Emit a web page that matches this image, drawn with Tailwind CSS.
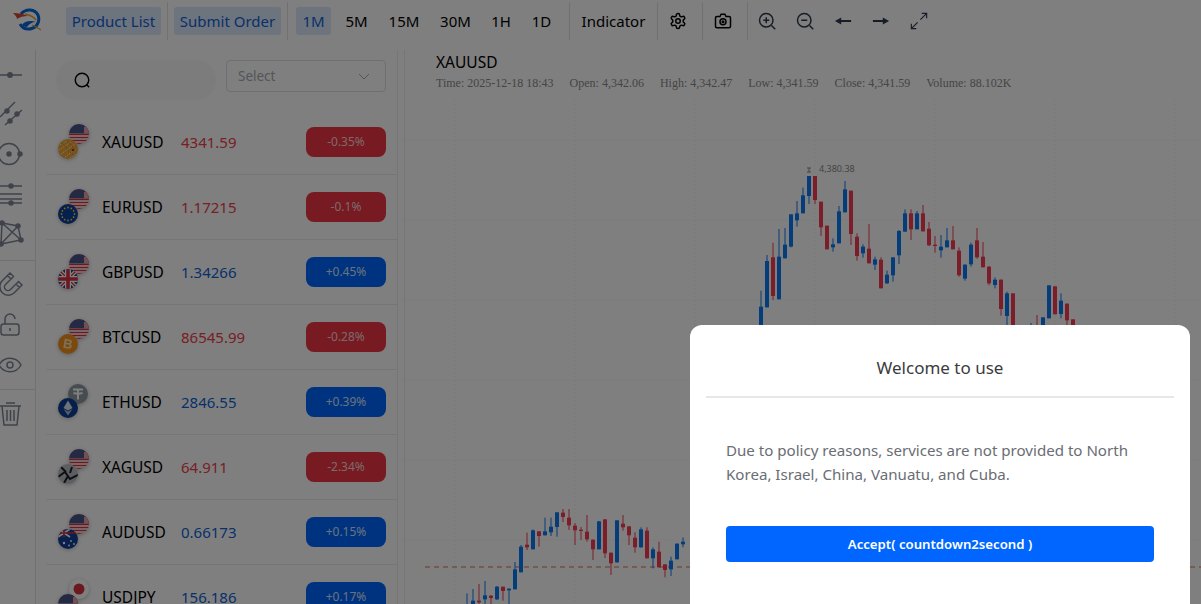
<!DOCTYPE html>
<html lang="en">
<head>
  <meta charset="UTF-8">
  <title>XAUUSD</title>
  <script src="https://cdn.jsdelivr.net/npm/@tailwindcss/browser@4"></script>
</head>
<body class="h-[604px] overflow-hidden bg-white font-['Noto_Sans',sans-serif] text-black">

  <svg width="0" height="0" class="absolute">
    <defs>
      <clipPath id="round"><circle cx="10" cy="10" r="10"/></clipPath>
      <symbol id="us" viewBox="0 0 20 20">
        <g clip-path="url(#round)">
          <rect width="20" height="20" fill="#fff"/>
          <path d="M0 1.500h20M0 4.500h20M0 7.500h20M0 10.500h20M0 13.500h20M0 16.500h20M0 19.500h20" stroke="#d8313f" stroke-width="1.500"/>
          <rect width="20" height="9.500" fill="#4a5488"/>
          <rect x="15" y="3" width="5" height="6.500" fill="#e8a0a8"/>
        </g>
      </symbol>
      <symbol id="gold" viewBox="0 0 20 20">
        <g clip-path="url(#round)">
          <rect width="20" height="20" fill="#f0a538"/>
          <path d="M2 6l7-4M1 11l12-8M3 15l14-10M7 18l11-8M12 19l6-4" stroke="#ffedc0" stroke-width="1" stroke-dasharray="1.500 1"/>
          <path d="M4 4l12 13M9 2l9 9" stroke="#b36a10" stroke-width="1" stroke-dasharray="1 1.500"/>
          <circle cx="15" cy="11" r="1.300" fill="#a83a20"/>
        </g>
      </symbol>
      <symbol id="eu" viewBox="0 0 20 20">
        <g clip-path="url(#round)">
          <rect width="20" height="20" fill="#0b3f9e"/>
          <g fill="#ffd02e">
            <circle cx="10" cy="3.500" r=".9"/><circle cx="13.300" cy="4.400" r=".9"/><circle cx="15.600" cy="6.800" r=".9"/><circle cx="16.500" cy="10" r=".9"/><circle cx="15.600" cy="13.200" r=".9"/><circle cx="13.300" cy="15.600" r=".9"/>
            <circle cx="10" cy="16.500" r=".9"/><circle cx="6.700" cy="15.600" r=".9"/><circle cx="4.400" cy="13.200" r=".9"/><circle cx="3.500" cy="10" r=".9"/><circle cx="4.400" cy="6.800" r=".9"/><circle cx="6.700" cy="4.400" r=".9"/>
          </g>
        </g>
      </symbol>
      <symbol id="uk" viewBox="0 0 20 20">
        <g clip-path="url(#round)">
          <rect width="20" height="20" fill="#1f3f8f"/>
          <path d="M0 0l20 20M20 0L0 20" stroke="#fff" stroke-width="4"/>
          <path d="M0 0l20 20M20 0L0 20" stroke="#d8313f" stroke-width="1.300"/>
          <path d="M10 0v20M0 10h20" stroke="#fff" stroke-width="6"/>
          <path d="M10 0v20M0 10h20" stroke="#d8313f" stroke-width="3.600"/>
        </g>
      </symbol>
      <symbol id="btc" viewBox="0 0 20 20">
        <circle cx="10" cy="10" r="10" fill="#f7931a"/>
        <text x="10" y="14.500" text-anchor="middle" font-family="Liberation Sans" font-size="13" font-weight="700" fill="#ffe0b0" transform="rotate(10 10 10)">B</text>
      </symbol>
      <symbol id="usdt" viewBox="0 0 20 20">
        <circle cx="10" cy="10" r="10" fill="#8d9aa2"/>
        <path d="M5 5.500h10M10 5.500v10M5.500 9c3 1 6 1 9 0" stroke="#fff" stroke-width="2" fill="none"/>
      </symbol>
      <symbol id="eth" viewBox="0 0 20 20">
        <circle cx="10" cy="10" r="10" fill="#0d3f96"/>
        <path d="M10 2.500L5.500 10 10 12.600 14.500 10z" fill="#dfe6f2"/>
        <path d="M10 13.600L5.500 11 10 17.500 14.500 11z" fill="#aab9d6"/>
      </symbol>
      <symbol id="xag" viewBox="0 0 20 20">
        <g clip-path="url(#round)">
          <rect width="20" height="20" fill="#b9bdc4"/>
          <path d="M0 13l7-5 5 7 8-4M3 3l5 5M6 19l4-7M14 3l-2 6" stroke="#1d2128" stroke-width="2" fill="none"/>
        </g>
      </symbol>
      <symbol id="aud" viewBox="0 0 20 20">
        <g clip-path="url(#round)">
          <rect width="20" height="20" fill="#123f98"/>
          <path d="M0 0l12 8M12 0L0 8" stroke="#fff" stroke-width="1.600"/>
          <path d="M6 0v8M0 4h20" stroke="#d8313f" stroke-width="1.600"/>
          <g fill="#fff"><circle cx="6" cy="14" r="1.200"/><circle cx="13" cy="12" r=".9"/><circle cx="16" cy="15" r=".9"/><circle cx="11" cy="16.500" r=".9"/></g>
        </g>
      </symbol>
      <symbol id="jp" viewBox="0 0 20 20">
        <circle cx="10" cy="10" r="10" fill="#fff"/>
        <circle cx="10" cy="10" r="5.500" fill="#d8313f"/>
      </symbol>
    </defs>
  </svg>

  <!-- top bar -->
  <div class="flex h-[42px] items-center pl-[13px] text-[15px]">
    <svg class="mr-[25px] h-[26px] w-[28px]" viewBox="0 0 28 26" fill="none">
      <path d="M8 6C13 0 22 1 25 7c2 5 0 11-5 13-5 2-10 1-13-4" stroke="#0a66d8" stroke-width="3"/>
      <path d="M9 17c2-4 9-5 14-3-4 0-7 2-9 5-2 0-4-1-5-2z" fill="#0a66d8"/>
      <path d="M0 5c5 0 11 1 15 3-5 0-8 1-11 3 0-2-2-4-4-6z" fill="#d6452e"/>
      <path d="M12 6c5 1 9 3 11 6" stroke="#f0a030" stroke-width="1.500"/>
      <path d="M19 17c3 1 6 3 9 5" stroke="#e0a040" stroke-width="1.200"/>
    </svg>
    <button class="h-7 w-[95px] rounded-[3px] bg-[#dbe8fb] text-[#0f62d6]">Product List</button>
    <span class="mx-[6px] h-[38px] w-px bg-[#e3e3e3]"></span>
    <button class="h-7 w-[107px] rounded-[3px] bg-[#dbe8fb] text-[#0f62d6]">Submit Order</button>
    <span class="ml-[6px] mr-2 h-[38px] w-px bg-[#e3e3e3]"></span>
    <button class="mr-[7px] h-7 w-[35px] rounded-[3px] bg-[#dbe8fb] text-[#0f62d6]">1M</button>
    <button class="h-7 w-[37px]">5M</button>
    <button class="h-7 w-[58px]">15M</button>
    <button class="h-7 w-[45px]">30M</button>
    <button class="h-7 w-[46px]">1H</button>
    <button class="h-7 w-[35px]">1D</button>
    <span class="ml-[10px] h-[38px] w-px bg-[#e3e3e3]"></span>
    <button class="h-7 w-[87px]">Indicator</button>
    <span class="h-[38px] w-px bg-[#e3e3e3]"></span>
    <div class="flex w-11 justify-center pr-1">
      <svg class="h-[18px] w-[18px]" viewBox="0 0 24 24" fill="none" stroke="#000" stroke-width="2"><path d="M12.220 2h-.44a2 2 0 0 0-2 2v.18a2 2 0 0 1-1 1.730l-.43.25a2 2 0 0 1-2 0l-.15-.08a2 2 0 0 0-2.730.73l-.22.38a2 2 0 0 0 .73 2.730l.15.1a2 2 0 0 1 1 1.720v.51a2 2 0 0 1-1 1.740l-.15.09a2 2 0 0 0-.73 2.730l.22.38a2 2 0 0 0 2.730.73l.15-.08a2 2 0 0 1 2 0l.43.25a2 2 0 0 1 1 1.730V20a2 2 0 0 0 2 2h.44a2 2 0 0 0 2-2v-.18a2 2 0 0 1 1-1.730l.43-.25a2 2 0 0 1 2 0l.15.08a2 2 0 0 0 2.730-.73l.22-.39a2 2 0 0 0-.73-2.730l-.15-.08a2 2 0 0 1-1-1.740v-.5a2 2 0 0 1 1-1.740l.15-.09a2 2 0 0 0 .73-2.730l-.22-.38a2 2 0 0 0-2.730-.73l-.15.08a2 2 0 0 1-2 0l-.43-.25a2 2 0 0 1-1-1.730V4a2 2 0 0 0-2-2z"/><circle cx="12" cy="12" r="3"/></svg>
    </div>
    <span class="h-[38px] w-px bg-[#e3e3e3]"></span>
    <div class="flex w-11 justify-center pr-1">
      <svg class="h-[18px] w-[18px]" viewBox="0 0 24 24" fill="none" stroke="#000" stroke-width="2"><path d="M8 6l1.500-3h5L16 6h4a2 2 0 0 1 2 2v11a2 2 0 0 1-2 2H4a2 2 0 0 1-2-2V8a2 2 0 0 1 2-2z"/><circle cx="12" cy="13" r="4"/><circle cx="12" cy="13" r="1"/></svg>
    </div>
    <span class="h-[38px] w-px bg-[#e3e3e3]"></span>
    <div class="flex">
      <div class="flex w-[38px] justify-center">
        <svg class="h-[18px] w-[18px]" viewBox="0 0 24 24" fill="none" stroke="#2d3a4e" stroke-width="2"><circle cx="11" cy="11" r="9"/><path d="M18 18l5 5M7 11h8M11 7v8"/></svg>
      </div>
      <div class="flex w-[38px] justify-center">
        <svg class="h-[18px] w-[18px]" viewBox="0 0 24 24" fill="none" stroke="#2d3a4e" stroke-width="2"><circle cx="11" cy="11" r="9"/><path d="M18 18l5 5M7 11h8"/></svg>
      </div>
      <div class="flex w-[38px] justify-center">
        <svg class="h-[18px] w-[18px]" viewBox="0 0 20 20" fill="#2d3a4e"><path d="M1 10l7-4v3h11v2H8v3z"/></svg>
      </div>
      <div class="flex w-[38px] justify-center">
        <svg class="h-[18px] w-[18px]" viewBox="0 0 20 20" fill="#2d3a4e"><path d="M19 10l-7 4v-3H1V9h11V6z"/></svg>
      </div>
      <div class="flex w-[38px] justify-center">
        <svg class="h-[18px] w-[18px]" viewBox="0 0 20 20" fill="none" stroke="#2d3a4e" stroke-width="1.300"><path d="M13 1.500h5.500V7M18 2l-6.500 6.500M7 18.500H1.500V13M2 18l6.500-6.500"/></svg>
      </div>
    </div>
  </div>

  <div class="mt-2 flex h-[554px]">
    <!-- drawing tools -->
    <div class="flex w-9 shrink-0 flex-col items-start border-r border-[#e3e3e3]">
      <svg class="mt-[5px] h-[40px] w-[35px]" viewBox="0 0 35 40" fill="none" stroke="#7d8796" stroke-width="1.500"><path d="M0 20h22"/><circle cx="10" cy="20" r="2.200" fill="#7d8796"/></svg>
      <svg class="h-[40px] w-[35px]" viewBox="0 0 35 40" fill="none" stroke="#7d8796" stroke-width="1.500"><path d="M0 22L15 7M5 30L22 15"/><circle cx="7" cy="16" r="2" fill="#7d8796"/><circle cx="10" cy="26" r="2" fill="#7d8796"/><circle cx="17" cy="19" r="2" fill="#7d8796"/></svg>
      <svg class="h-[40px] w-[35px]" viewBox="0 0 35 40" fill="none" stroke="#7d8796" stroke-width="1.500"><circle cx="9" cy="19" r="10.500"/><circle cx="9" cy="19" r="2" fill="#7d8796"/><circle cx="20" cy="19" r="2" fill="#7d8796"/></svg>
      <svg class="h-[40px] w-[35px]" viewBox="0 0 35 40" fill="none" stroke="#7d8796" stroke-width="1.500"><path d="M0 11h22M0 19h22M0 24h22M0 28h22"/><circle cx="11" cy="11" r="2" fill="#7d8796"/><circle cx="11" cy="28" r="2" fill="#7d8796"/></svg>
      <svg class="h-[40px] w-[35px]" viewBox="0 0 35 40" fill="none" stroke="#7d8796" stroke-width="1.500"><path d="M2 8l16 3 3 14L1 29zM2 8l19 17M18 11L1 29"/><circle cx="2" cy="8" r="2" fill="#7d8796"/><circle cx="18" cy="11" r="2" fill="#7d8796"/><circle cx="21" cy="25" r="2" fill="#7d8796"/><circle cx="1" cy="29" r="2" fill="#7d8796"/></svg>
      <div class="mt-[5px] h-px w-[35px] bg-[#e3e3e3]"></div>
      <svg class="mt-[4px] h-[40px] w-[35px]" viewBox="0 0 35 40" fill="none" stroke="#7d8796" stroke-width="1.500"><path d="M10 8L2 16A8.500 8.500 0 0 0 14 28L22 20L18.500 16.500L10.500 24.500A3.500 3.500 0 0 1 5.500 19.500L13.500 11.500ZM7.500 10.500L11 14M16 19L19.500 22.500"/></svg>
      <svg class="h-[40px] w-[35px]" viewBox="0 0 35 40" fill="none" stroke="#7d8796" stroke-width="1.500"><rect x="1" y="19" width="18" height="11" rx="2.500"/><path d="M5 19v-5a5 5 0 0 1 10 0M10 23v3"/></svg>
      <svg class="h-[40px] w-[35px]" viewBox="0 0 35 40" fill="none" stroke="#7d8796" stroke-width="1.500"><path d="M-1 20c5-9 17-9 22 0-5 9-17 9-22 0z"/><circle cx="10" cy="20" r="3"/></svg>
      <div class="mt-1 h-px w-[35px] bg-[#e3e3e3]"></div>
      <svg class="mt-[4px] h-[40px] w-[35px]" viewBox="0 0 35 40" fill="none" stroke="#7d8796" stroke-width="1.500"><path d="M0 12h21M6 9h9M2 12l2 19h13l2-19M7 16v11M10.500 16v11M14 16v11"/></svg>
    </div>

    <!-- product list -->
    <div class="ml-[10px] w-[352px] shrink-0 border-r border-[#ececec]">
      <div class="flex h-[60px] items-start gap-[10px] pl-[10px] pt-[10px]">
        <div class="flex h-10 w-40 items-center rounded-full bg-[#f8f8f8] pl-[17px]">
          <svg class="h-[18px] w-[18px]" viewBox="0 0 20 20" fill="none" stroke="#000" stroke-width="1.600"><circle cx="10" cy="10" r="7.500"/><path d="M15 15l3 3"/></svg>
        </div>
        <div class="flex h-8 w-40 items-center justify-between rounded-[4px] border border-[#dcdfe6] pl-[11px] pr-[15px] text-[13.500px] text-[#a8abb2]">
          <span>Select</span>
          <svg class="h-3 w-3" viewBox="0 0 12 12" fill="none" stroke="#a8abb2" stroke-width="1"><path d="M1 4l5 5 5-5"/></svg>
        </div>
      </div>

      <div class="flex h-[65px] items-center border-b border-[#ececec] pl-3 pr-[11px]">
        <svg class="h-9 w-8 shrink-0 drop-shadow-[0_1px_2px_rgba(0,0,0,.25)]" viewBox="0 0 32 36"><use href="#us" x="11" width="20" height="20"/><use href="#gold" y="15" width="20" height="20"/></svg>
        <span class="ml-3 w-[79px] shrink-0 pt-px text-[15.500px]">XAUUSD</span>
        <span class="flex-1 text-[15px] text-[#f04048]">4341.59</span>
        <span class="flex h-[30px] w-20 items-center justify-center rounded-lg bg-[#f03442] text-xs text-[#f6d5d7]">-0.35%</span>
      </div>
      <div class="flex h-[65px] items-center border-b border-[#ececec] pl-3 pr-[11px]">
        <svg class="h-9 w-8 shrink-0 drop-shadow-[0_1px_2px_rgba(0,0,0,.25)]" viewBox="0 0 32 36"><use href="#us" x="11" width="20" height="20"/><use href="#eu" y="15" width="20" height="20"/></svg>
        <span class="ml-3 w-[79px] shrink-0 pt-px text-[15.500px]">EURUSD</span>
        <span class="flex-1 text-[15px] text-[#f04048]">1.17215</span>
        <span class="flex h-[30px] w-20 items-center justify-center rounded-lg bg-[#f03442] text-xs text-[#f6d5d7]">-0.1%</span>
      </div>
      <div class="flex h-[65px] items-center border-b border-[#ececec] pl-3 pr-[11px]">
        <svg class="h-9 w-8 shrink-0 drop-shadow-[0_1px_2px_rgba(0,0,0,.25)]" viewBox="0 0 32 36"><use href="#us" x="11" width="20" height="20"/><use href="#uk" y="15" width="20" height="20"/></svg>
        <span class="ml-3 w-[79px] shrink-0 pt-px text-[15.500px]">GBPUSD</span>
        <span class="flex-1 text-[15px] text-[#0f62d6]">1.34266</span>
        <span class="flex h-[30px] w-20 items-center justify-center rounded-lg bg-[#0066ff] text-xs text-[#d5e5fc]">+0.45%</span>
      </div>
      <div class="flex h-[65px] items-center border-b border-[#ececec] pl-3 pr-[11px]">
        <svg class="h-9 w-8 shrink-0 drop-shadow-[0_1px_2px_rgba(0,0,0,.25)]" viewBox="0 0 32 36"><use href="#us" x="11" width="20" height="20"/><use href="#btc" y="15" width="20" height="20"/></svg>
        <span class="ml-3 w-[79px] shrink-0 pt-px text-[15.500px]">BTCUSD</span>
        <span class="flex-1 text-[15px] text-[#f04048]">86545.99</span>
        <span class="flex h-[30px] w-20 items-center justify-center rounded-lg bg-[#f03442] text-xs text-[#f6d5d7]">-0.28%</span>
      </div>
      <div class="flex h-[65px] items-center border-b border-[#ececec] pl-3 pr-[11px]">
        <svg class="h-9 w-8 shrink-0 drop-shadow-[0_1px_2px_rgba(0,0,0,.25)]" viewBox="0 0 32 36"><use href="#usdt" x="10" width="20" height="20"/><use href="#eth" y="14" width="20" height="20"/></svg>
        <span class="ml-3 w-[79px] shrink-0 pt-px text-[15.500px]">ETHUSD</span>
        <span class="flex-1 text-[15px] text-[#0f62d6]">2846.55</span>
        <span class="flex h-[30px] w-20 items-center justify-center rounded-lg bg-[#0066ff] text-xs text-[#d5e5fc]">+0.39%</span>
      </div>
      <div class="flex h-[65px] items-center border-b border-[#ececec] pl-3 pr-[11px]">
        <svg class="h-9 w-8 shrink-0 drop-shadow-[0_1px_2px_rgba(0,0,0,.25)]" viewBox="0 0 32 36"><use href="#us" x="11" width="20" height="20"/><use href="#xag" y="15" width="20" height="20"/></svg>
        <span class="ml-3 w-[79px] shrink-0 pt-px text-[15.500px]">XAGUSD</span>
        <span class="flex-1 text-[15px] text-[#f04048]">64.911</span>
        <span class="flex h-[30px] w-20 items-center justify-center rounded-lg bg-[#f03442] text-xs text-[#f6d5d7]">-2.34%</span>
      </div>
      <div class="flex h-[65px] items-center border-b border-[#ececec] pl-3 pr-[11px]">
        <svg class="h-9 w-8 shrink-0 drop-shadow-[0_1px_2px_rgba(0,0,0,.25)]" viewBox="0 0 32 36"><use href="#us" x="11" width="20" height="20"/><use href="#aud" y="15" width="20" height="20"/></svg>
        <span class="ml-3 w-[79px] shrink-0 pt-px text-[15.500px]">AUDUSD</span>
        <span class="flex-1 text-[15px] text-[#0f62d6]">0.66173</span>
        <span class="flex h-[30px] w-20 items-center justify-center rounded-lg bg-[#0066ff] text-xs text-[#d5e5fc]">+0.15%</span>
      </div>
      <div class="flex h-[65px] items-center border-b border-[#ececec] pl-3 pr-[11px]">
        <svg class="h-9 w-8 shrink-0 drop-shadow-[0_1px_2px_rgba(0,0,0,.25)]" viewBox="0 0 32 36"><use href="#jp" x="11" width="20" height="20"/><use href="#us" y="15" width="20" height="20"/></svg>
        <span class="ml-3 w-[79px] shrink-0 pt-px text-[15.500px]">USDJPY</span>
        <span class="flex-1 text-[15px] text-[#0f62d6]">156.186</span>
        <span class="flex h-[30px] w-20 items-center justify-center rounded-lg bg-[#0066ff] text-xs text-[#d5e5fc]">+0.17%</span>
      </div>
    </div>

    <!-- chart -->
    <div class="relative ml-[6px] flex-1 border-l border-[#ececec]">
      <div class="pl-[31px] pt-[2px]">
        <div class="text-[15.500px] leading-5">XAUUSD</div>
        <div class="flex gap-[16px] font-['Liberation_Serif',serif] text-xs leading-[22px] text-[#8a8a8a]">
          <span>Time: 2025-12-18 18:43</span>
          <span>Open: 4,342.06</span>
          <span>High: 4,342.47</span>
          <span>Low: 4,341.59</span>
          <span>Close: 4,341.59</span>
          <span>Volume: 88.102K</span>
        </div>
      </div>
      <svg id="chart" class="absolute left-0 top-0" width="796" height="554" viewBox="405 50 796 554"></svg>
    </div>
  </div>

  <!-- dialog -->
  <div class="fixed inset-0 bg-black/50"></div>
  <div class="fixed left-[690px] top-[325px] h-[300px] w-[500px] rounded-xl bg-white px-4">
    <div class="flex h-[73px] items-center justify-center border-b-2 border-[#e5e7eb] pt-[15px] text-[17px] text-[#3a3c40]">Welcome to use</div>
    <p class="mt-[40px] px-5 text-[15.100px] leading-6 text-[#6a6d73]">Due to policy reasons, services are not provided to North Korea, Israel, China, Vanuatu, and Cuba.</p>
    <div class="mx-5 mt-10 flex h-9 items-center justify-center rounded-[4px] bg-[#0066ff] pt-px text-[13.200px] font-semibold text-white">Accept( countdown2second )</div>
  </div>

  <script>
    // candles read from the picture: [x, wickTop, wickBottom, bodyTop, bodyBottom, up]
    const upper = [
      [63,422,525,470,525,1],[81,315,472,333,472,1],[99,278,450,322,438,0],[117,237,448,320,448,1],[135,234,325,284,325,1],
      [153,193,292,193,290,1],[171,153,230,190,211,1],[189,113,190,136,190,1],[207,78,162,78,138,1],[225,78,162,78,150,0],
      [243,155,258,155,232,0],[261,227,298,227,298,0],[279,265,305,283,292,1],[297,168,280,184,280,1],[315,93,187,118,187,1],
      [333,122,285,122,252,0],[351,250,332,260,318,0],[369,283,323,290,310,1],[387,222,340,296,340,0],[405,320,360,328,344,1],
      [423,322,415,329,415,0],[441,362,402,374,400,1],[459,322,395,322,376,1],[477,240,342,243,316,1],[495,178,245,190,245,1],
      [513,178,270,190,238,0],[531,183,238,190,238,1],[549,165,245,190,244,0],[567,216,288,236,286,0],[585,258,308,284,288,0],
      [603,255,323,290,301,1],[621,234,292,271,292,1],[639,228,298,271,298,0],[657,292,380,302,376,0],[675,343,392,344,386,1],
      [693,278,350,284,343,1],[711,234,326,271,322,0],[729,276,352,320,352,0],[747,348,406,350,400,0],[765,382,415,389,405,1],
      [783,388,497,389,477,0],[801,425,525,430,498,1],[819,430,525,430,525,0],[873,519,525,525,525,1],[891,495,525,525,525,0],
      [909,502,525,502,525,1],[927,406,505,406,505,1],[945,409,493,409,493,0],[963,430,505,452,492,1],[981,460,525,461,511,0],[999,508,525,508,525,0]
    ];
    const lower = [
      [141,310,342,342,342,1],[159,297,342,332,342,1],[177,282,342,332,337,0],[195,273,342,316,328,1],[213,315,342,317,324,0],
      [231,288,330,290,328,1],[249,290,332,290,303,0],[267,295,342,296,301,1],[285,216,298,238,298,1],[303,165,247,170,247,1],
      [321,128,180,164,172,0],[339,118,178,121,178,1],[357,124,170,124,138,0],[375,83,136,124,136,1],[393,83,138,110,127,1],
      [411,67,140,67,111,1],[429,57,96,68,81,0],[447,57,120,83,106,0],[465,99,165,107,121,0],[483,111,150,119,123,0],
      [501,75,155,125,148,0],[519,148,210,149,178,0],[537,93,178,94,178,1],[555,88,204,88,190,0],[573,188,255,188,220,0],
      [591,91,218,91,217,1],[609,75,122,101,112,0],[627,109,165,109,136,0],[645,127,188,143,172,0],[663,112,173,118,172,1],
      [681,112,205,122,205,0],[699,172,235,178,205,1],[717,155,232,185,232,0],[735,223,262,223,240,0],[753,200,258,212,238,1],
      [771,160,208,161,208,1],[789,142,172,155,163,1]
    ];

    let svg = '';
    for (let y = 140; y <= 540; y += 80) {
      svg += `<path d="M405 ${y}H1201" stroke="#efefef" stroke-dasharray="1.500 2.500"/>`;
    }
    for (let x = 455; x <= 1175; x += 120) {
      svg += `<path d="M${x} 100V604" stroke="#efefef" stroke-dasharray="1.500 2.500"/>`;
    }
    svg += '<path d="M425 567H1201" stroke="#e06a50" stroke-dasharray="5 4"/>';

    function candle(c, ox, oy) {
      const x = ox + c[0] / 3;
      const color = c[5] ? '#0b7bf4' : '#f63c52';
      let out = `<rect x="${x - 1}" y="${oy + c[1] / 3}" width="2" height="${(c[2] - c[1]) / 3}" fill="${color}" opacity=".5"/>`;
      out += `<rect x="${x - 2}" y="${oy + c[3] / 3}" width="4" height="${Math.max((c[4] - c[3]) / 3, 1)}" fill="${color}"/>`;
      return out;
    }
    upper.forEach(c => svg += candle(c, 740, 150));
    lower.forEach(c => svg += candle(c, 420, 490));

    svg += '<path d="M811 168h-4m2 0v4m-2 0h4" stroke="#8a8a8a" fill="none"/>';
    svg += '<text x="819" y="172" font-family="Noto Sans" font-size="9" fill="#8a8a8a">4,380.38</text>';
    document.getElementById('chart').innerHTML = svg;
  </script>
</body>
</html>
